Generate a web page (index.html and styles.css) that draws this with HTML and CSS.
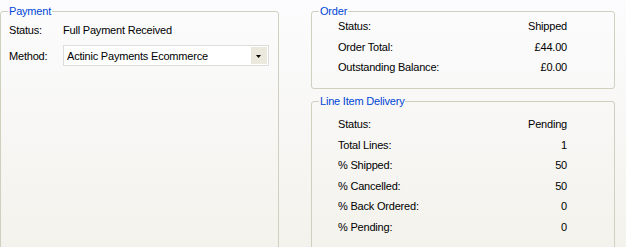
FILE: index.html
```html
<!DOCTYPE html>
<html>
<head>
<meta charset="utf-8">
<link rel="stylesheet" href="styles.css">
</head>
<body>
<div class="page">
  <fieldset class="group payment">
    <legend>Payment</legend>
    <div class="pbody">
      <div class="prow">
        <span class="plabel">Status:</span>
        <span class="pvalue">Full Payment Received</span>
      </div>
      <div class="prow prow-select">
        <span class="plabel">Method:</span>
        <div class="select">
          <span class="select-text">Actinic Payments Ecommerce</span>
          <span class="select-btn">
            <svg width="16" height="17" viewBox="0 0 16 17"><polygon points="5,8 10,8 7.5,11" fill="#000"/></svg>
          </span>
        </div>
      </div>
    </div>
  </fieldset>
  <div class="right">
    <fieldset class="group order">
      <legend>Order</legend>
      <div class="rows rows-order">
        <div class="row"><span>Status:</span><span>Shipped</span></div>
        <div class="row"><span>Order Total:</span><span>£44.00</span></div>
        <div class="row"><span>Outstanding Balance:</span><span>£0.00</span></div>
      </div>
    </fieldset>
    <fieldset class="group lines">
      <legend>Line Item Delivery</legend>
      <div class="rows rows-lines">
        <div class="row"><span>Status:</span><span>Pending</span></div>
        <div class="row"><span>Total Lines:</span><span>1</span></div>
        <div class="row"><span>% Shipped:</span><span>50</span></div>
        <div class="row"><span>% Cancelled:</span><span>50</span></div>
        <div class="row"><span>% Back Ordered:</span><span>0</span></div>
        <div class="row"><span>% Pending:</span><span>0</span></div>
      </div>
    </fieldset>
  </div>
</div>
</body>
</html>
```
FILE: styles.css
```css
html, body {
  margin: 0;
  padding: 0;
}
body {
  width: 626px;
  height: 247px;
  overflow: hidden;
  background: linear-gradient(#fcfcfe, #f3f2ec);
  font-family: "Liberation Sans", Arial, sans-serif;
  font-size: 11px;
  letter-spacing: -0.2px;
  color: #000;
}
.page {
  display: flex;
  gap: 32px;
  padding-top: 5px;
  height: 242px;
  overflow: hidden;
}
.group {
  margin: 0;
  padding: 0;
  border: 1px solid #d0d0bf;
  border-radius: 3px;
  box-sizing: border-box;
  min-width: 0;
}
.group legend {
  margin-left: 7px;
  padding: 0 1px;
  color: #0046d5;
  line-height: 13px;
  font-size: 11px;
}
.payment {
  width: 279px;
  height: 246px;
}
.pbody {
  padding-left: 8px;
}
.prow {
  display: flex;
  align-items: center;
  height: 24px;
}
.prow-select {
  height: 21px;
  margin-top: 3px;
}
.plabel {
  width: 54px;
  flex: none;
}
.select {
  width: 206px;
  height: 21px;
  box-sizing: border-box;
  border: 1px solid #dcdcd8;
  background: #fff;
  display: flex;
  align-items: center;
  justify-content: space-between;
}
.select-text {
  padding-left: 3px;
}
.select-btn {
  width: 16px;
  height: 17px;
  margin-right: 1px;
  background: #ebe9dd;
  display: flex;
}
.right {
  display: flex;
  flex-direction: column;
  gap: 6px;
  width: 304px;
}
.order {
  height: 84px;
  flex: none;
}
.lines {
  height: 156px;
  flex: none;
}
.rows {
  padding: 0 47px 0 26px;
}
.rows-order {
  margin-top: -2px;
}
.rows-lines {
  margin-top: 6px;
}
.row {
  display: flex;
  justify-content: space-between;
  align-items: center;
  height: 20.5px;
}
```
